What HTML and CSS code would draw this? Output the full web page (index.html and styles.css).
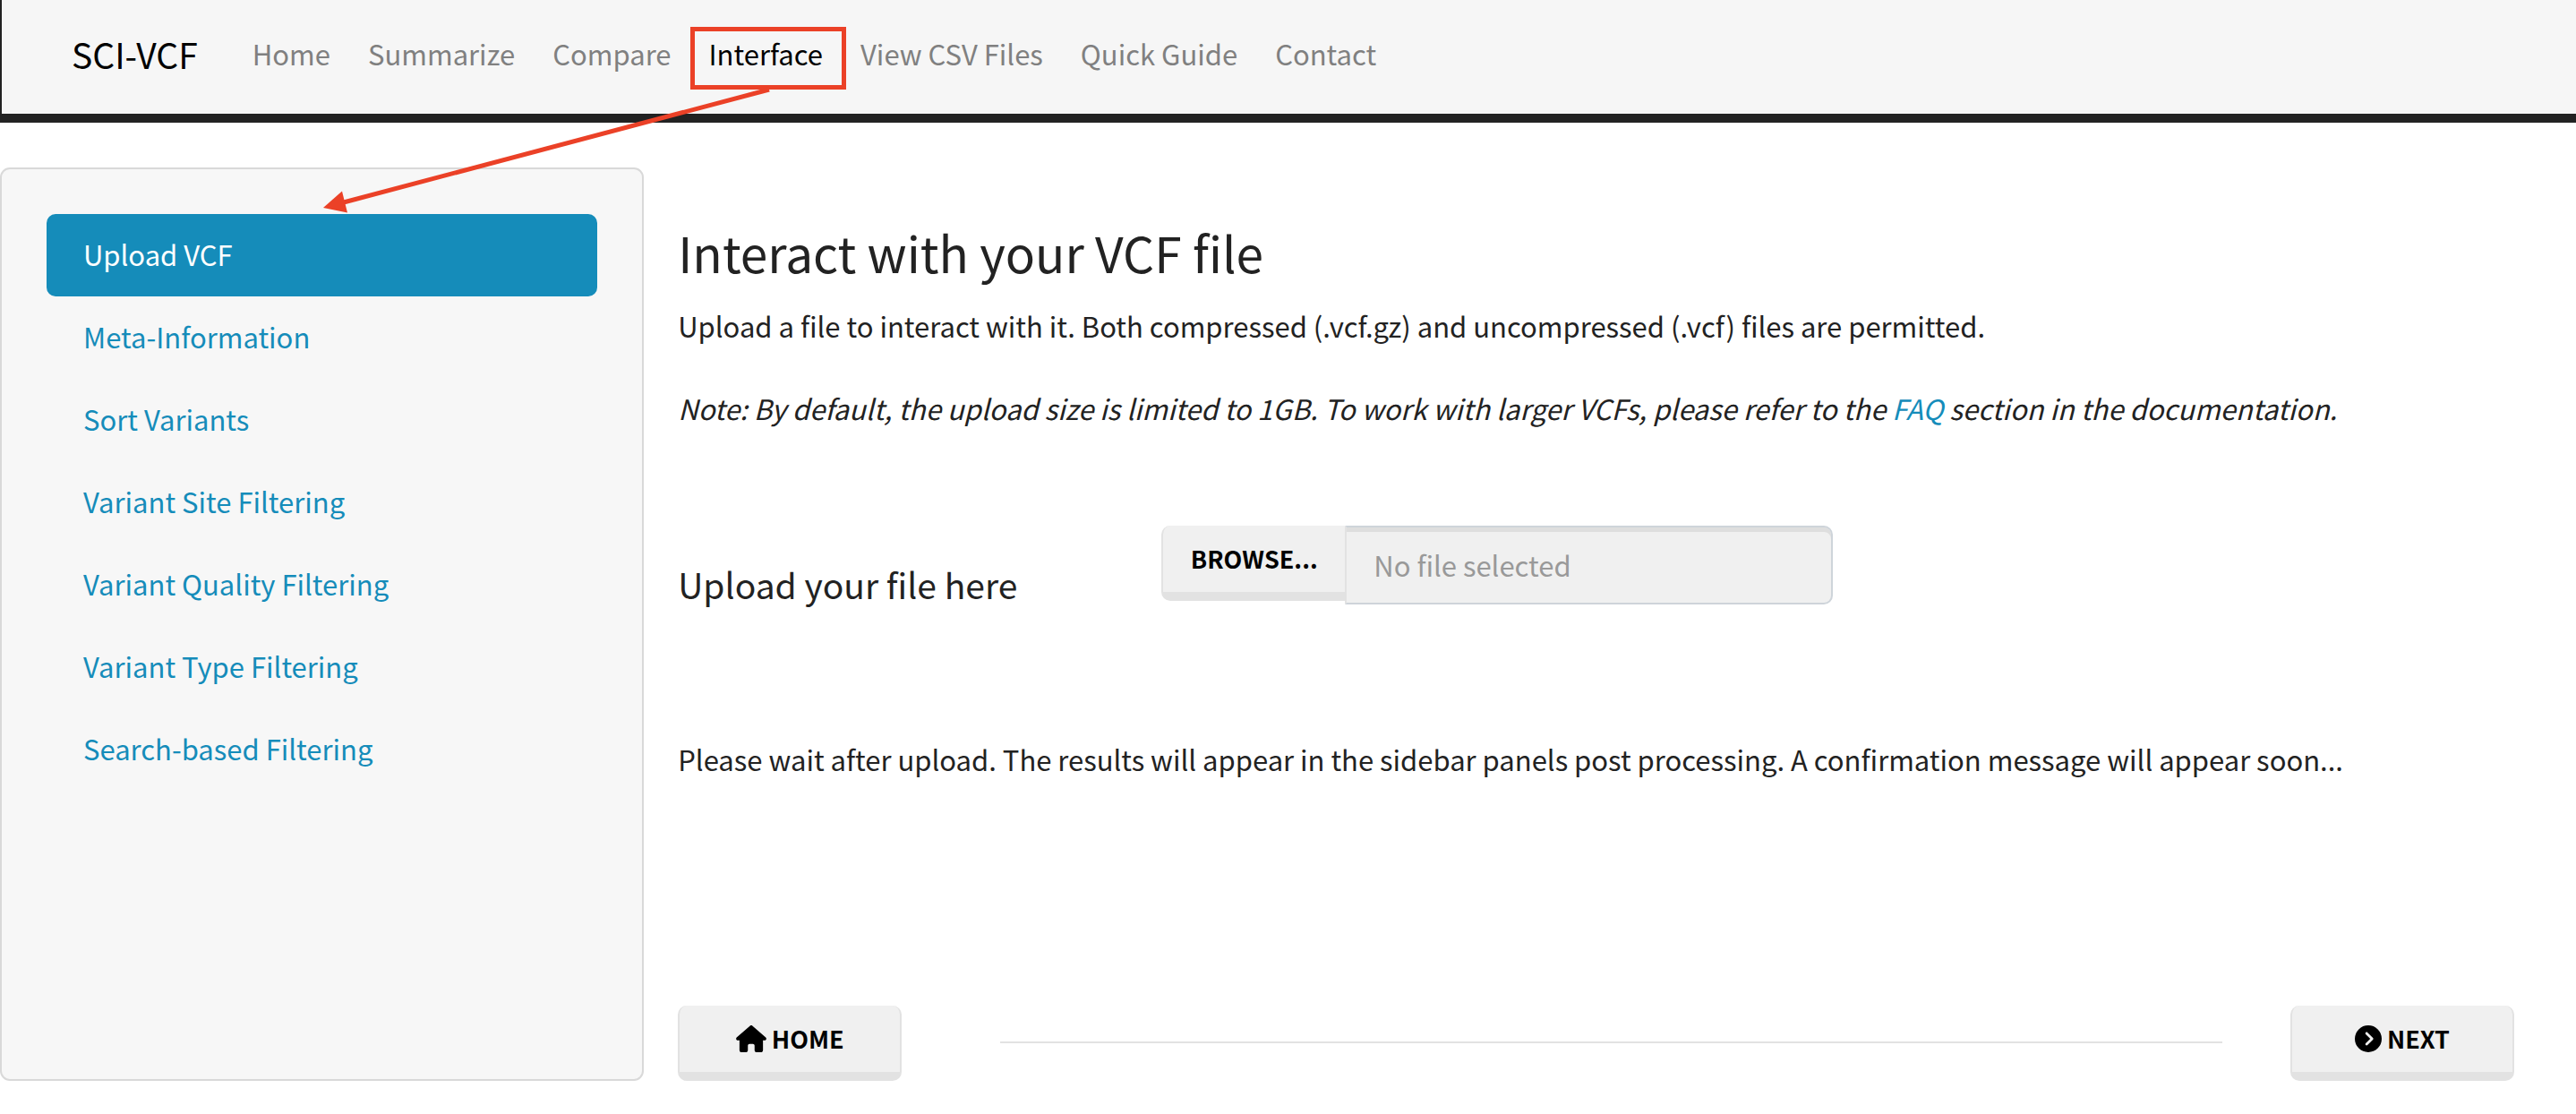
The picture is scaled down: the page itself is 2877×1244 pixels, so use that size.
FILE: index.html
```html
<!DOCTYPE html>
<html lang="en">
<head>
<meta charset="utf-8">
<title>SCI-VCF</title>
<meta name="viewport" content="width=device-width, initial-scale=1">
<link rel="stylesheet" href="styles.css">
</head>
<body>
<header class="navbar">
  <a class="brand" href="#">SCI-VCF</a>
  <nav class="nav" aria-label="Main">
    <a class="nav-link" href="#home">Home</a>
    <a class="nav-link" href="#summarize">Summarize</a>
    <a class="nav-link" href="#compare">Compare</a>
    <a class="nav-link active" href="#interface" aria-current="page">Interface</a>
    <a class="nav-link" href="#csv">View CSV Files</a>
    <a class="nav-link" href="#guide">Quick Guide</a>
    <a class="nav-link" href="#contact">Contact</a>
  </nav>
</header>

<div class="layout">
  <nav class="sidebar" aria-label="Interface sections">
    <a class="pill active" href="#upload">Upload VCF</a>
    <a class="pill" href="#meta">Meta-Information</a>
    <a class="pill" href="#sort">Sort Variants</a>
    <a class="pill" href="#site">Variant Site Filtering</a>
    <a class="pill" href="#quality">Variant Quality Filtering</a>
    <a class="pill" href="#type">Variant Type Filtering</a>
    <a class="pill" href="#search">Search-based Filtering</a>
  </nav>

  <main class="content">
    <h1 class="title">Interact with your VCF file</h1>
    <p class="text">Upload a file to interact with it. Both compressed (.vcf.gz) and uncompressed (.vcf) files are permitted.</p>
    <p class="text note">Note: By default, the upload size is limited to 1GB. To work with larger VCFs, please refer to the <a class="link" href="#faq">FAQ</a> section in the documentation.</p>

    <div class="upload">
      <label class="upload-label" for="file-name">Upload your file here</label>
      <div class="file-group">
        <button class="btn btn-browse" type="button">BROWSE...</button>
        <input class="file-name" id="file-name" type="text" placeholder="No file selected" readonly>
      </div>
    </div>

    <p class="text">Please wait after upload. The results will appear in the sidebar panels post processing. A confirmation message will appear soon...</p>

    <div class="actions">
      <button class="btn btn-step" type="button">
        <svg class="icon icon-home" viewBox="0 0 576 512" aria-hidden="true"><path d="M575.8 255.500c0 18-15 32.100-32 32.100h-32l.7 160.200c0 2.700-.2 5.400-.5 8.100V472c0 22.100-17.900 40-40 40H456c-1.100 0-2.200 0-3.300-.1c-1.400 .1-2.800 .1-4.200 .1H416 392c-22.100 0-40-17.900-40-40V448 384c0-17.700-14.300-32-32-32H256c-17.700 0-32 14.300-32 32v64 24c0 22.100-17.900 40-40 40H160 128.100c-1.500 0-3-.1-4.500-.2c-1.200 .1-2.400 .2-3.600 .2H104c-22.100 0-40-17.900-40-40V360c0-.9 0-1.900 .1-2.800V287.600H32c-18 0-32-14-32-32.100c0-9 3-17 10-24L266.400 8c7-7 15-8 22-8s15 2 21 7L564.800 231.500c8 7 12 15 11 24z"/></svg>
        HOME
      </button>
      <hr class="rule">
      <button class="btn btn-step" type="button">
        <svg class="icon icon-next" viewBox="0 0 512 512" aria-hidden="true"><path d="M0 256a256 256 0 1 0 512 0A256 256 0 1 0 0 256zM241 377c-9.400 9.400-24.600 9.400-33.900 0s-9.400-24.600 0-33.900l87-87-87-87c-9.400-9.400-9.400-24.600 0-33.900s24.600-9.400 33.900 0L345 239c9.400 9.400 9.400 24.600 0 33.900L241 377z"/></svg>
        NEXT
      </button>
    </div>
  </main>
</div>

<svg class="annotation" viewBox="0 0 960 250" aria-hidden="true">
  <rect x="773.500" y="32.500" width="169" height="65" fill="none" stroke="#eb4127" stroke-width="5"/>
  <path d="M859 100L380 227" stroke="#eb4127" stroke-width="5"/>
  <path d="M361 232L382 213.500L388 237.500z" fill="#eb4127"/>
</svg>
</body>
</html>
```
FILE: styles.css
```css
* {
  box-sizing: border-box;
}

body {
  margin: 0;
  background: #fff;
  color: #222;
  font-family: "Noto Sans CJK SC", "Noto Sans", sans-serif;
  font-size: 31px;
  line-height: 46px;
}

a {
  color: #158cba;
  text-decoration: none;
}

.navbar {
  display: flex;
  align-items: center;
  gap: 61px;
  padding: 37px 78px 44px;
  background: #f6f6f6;
  border-left: 2px solid #222;
  border-bottom: 10px solid #222;
}

.brand {
  color: #000;
  font-size: 39px;
}

.nav {
  display: flex;
  flex-wrap: wrap;
  gap: 42px;
}

.nav-link {
  color: #808080;
}

.nav-link.active {
  color: #000;
}

.layout {
  display: grid;
  grid-template-columns: 1fr 3fr;
  padding: 50px 0 37px;
}

.sidebar {
  padding: 50px;
  background: #f7f7f7;
  border: 2px solid #d9d9d9;
  border-radius: 11px;
}

.pill {
  display: block;
  padding: 22px 41px 24px;
  border-radius: 10px;
}

.pill.active {
  background: #158cba;
  color: #fff;
}

.content {
  padding: 62px 69px 0 38px;
}

.title {
  margin: 0 0 28px;
  font-size: 55px;
  font-weight: 400;
  line-height: 64px;
}

.text {
  margin: 0;
}

.note {
  margin-top: 46px;
  font-style: italic;
}

.upload {
  display: grid;
  grid-template-columns: 540px 750px;
  align-items: start;
  margin: 108px 0 150px;
}

.upload-label {
  padding-top: 42px;
  font-size: 39px;
}

.file-group {
  display: flex;
  align-items: flex-start;
}

.btn {
  height: 84px;
  padding: 0;
  background: #f0f0f0;
  border: 0 solid #e2e2e2;
  border-width: 0 2px 10px;
  border-radius: 10px;
  color: #000;
  font-family: inherit;
  font-size: 27px;
  font-weight: 700;
  line-height: 36px;
}

.btn-browse {
  width: 205px;
  border-right-width: 0;
  border-radius: 10px 0 0 10px;
}

.file-name {
  flex: 1;
  min-width: 0;
  height: 88px;
  padding: 0 30px 2px;
  background: #f0f0f0;
  border: 2px solid #ced4da;
  border-left-color: #e2e2e2;
  border-radius: 0 10px 10px 0;
  box-shadow: inset 0 5px 0 #dedede;
  color: #222;
  font-family: inherit;
  font-size: 31px;
}

.file-name::placeholder {
  color: #999;
  opacity: 1;
}

.actions {
  display: flex;
  align-items: center;
  justify-content: space-between;
  margin-top: 252px;
}

.btn-step {
  display: flex;
  align-items: center;
  justify-content: center;
  gap: 6px;
  width: 250px;
}

.icon {
  height: 30px;
  fill: currentColor;
}

.icon-home {
  width: 34px;
}

.icon-next {
  width: 30px;
}

.rule {
  flex: 1;
  margin: 0 76px 2px 110px;
  border: 0;
  border-top: 2px solid #e2e2e2;
}

.annotation {
  position: absolute;
  top: 0;
  left: 0;
  width: 960px;
  height: 250px;
  pointer-events: none;
}
```
